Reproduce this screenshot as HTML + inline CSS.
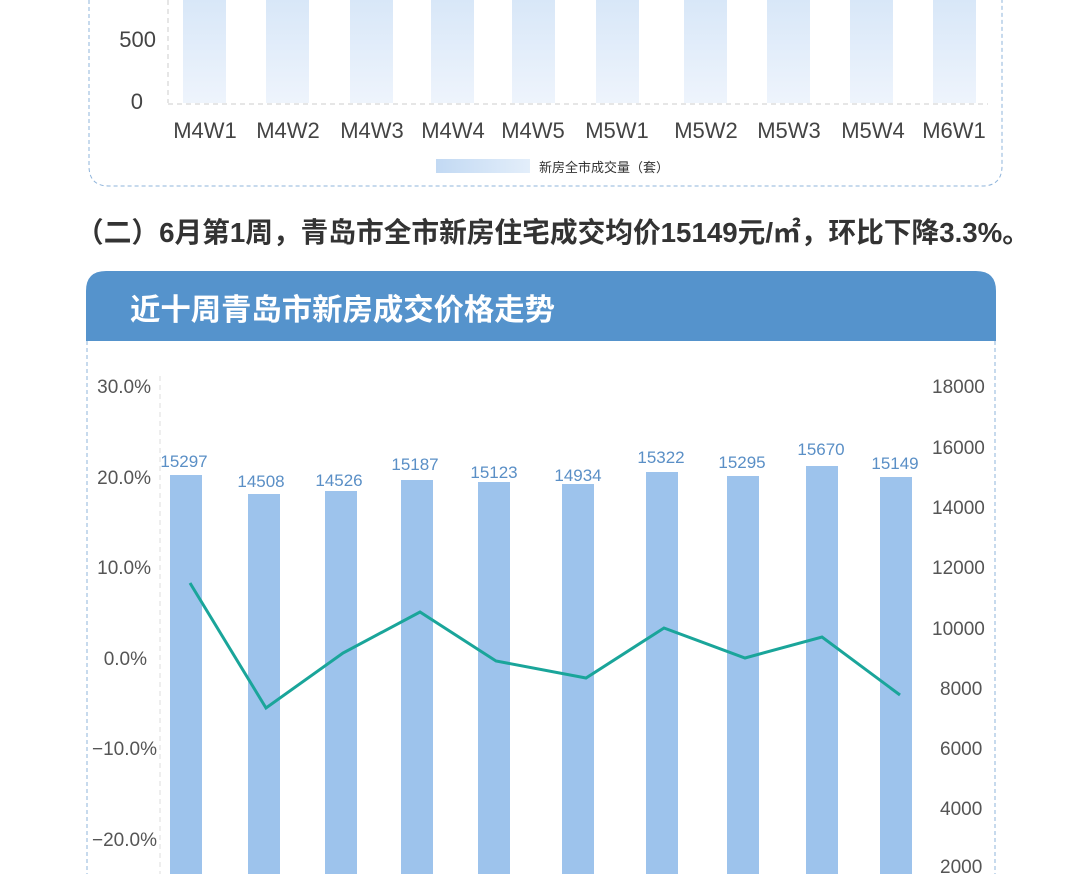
<!DOCTYPE html><html style="overflow:hidden;width:1080px;height:874px"><head><meta charset="utf-8"><style>
body{margin:0;width:1080px;height:874px;overflow:hidden;background:#fff;font-family:"Liberation Sans","Noto Sans CJK SC",sans-serif;position:relative}
.a{position:absolute;display:block}
</style></head><body>
<svg class="a" style="left:0;top:0;overflow:hidden" width="1080" height="874">
<defs><linearGradient id="g" x1="0" y1="0" x2="0" y2="1"><stop offset="0" stop-color="#d8e7f8"/><stop offset="1" stop-color="#eef4fc"/></linearGradient>
<linearGradient id="lg" x1="0" x2="1"><stop offset="0" stop-color="#c2d9f3"/><stop offset="1" stop-color="#e3eefa"/></linearGradient></defs>
<path d="M89 0 V166 Q89 186 109 186 H982 Q1002 186 1002 166 V0" fill="none" stroke="#8fb4db" stroke-dasharray="4 3"/>
<line x1="168" y1="0" x2="168" y2="103" stroke="#ccc" stroke-dasharray="5 4"/>
<g fill="url(#g)">
<rect x="183" y="0" width="43" height="103"/><rect x="266" y="0" width="43" height="103"/><rect x="350" y="0" width="43" height="103"/><rect x="431" y="0" width="43" height="103"/><rect x="512" y="0" width="43" height="103"/><rect x="596" y="0" width="43" height="103"/><rect x="684" y="0" width="43" height="103"/><rect x="767" y="0" width="43" height="103"/><rect x="850" y="0" width="43" height="103"/><rect x="933" y="0" width="43" height="103"/></g>
<line x1="168" y1="104" x2="988" y2="104" stroke="#ccc" stroke-dasharray="5 4"/>
<g font-size="22" fill="#444" text-anchor="end"><text x="156" y="47">500</text><text x="143" y="109">0</text></g>
<g font-size="22" fill="#444" text-anchor="middle"><text x="205" y="138">M4W1</text><text x="288" y="138">M4W2</text><text x="372" y="138">M4W3</text><text x="453" y="138">M4W4</text><text x="533" y="138">M4W5</text><text x="617" y="138">M5W1</text><text x="706" y="138">M5W2</text><text x="789" y="138">M5W3</text><text x="873" y="138">M5W4</text><text x="954" y="138">M6W1</text></g>
<rect x="436" y="159" width="94" height="14" fill="url(#lg)"/>
<text x="539" y="172" font-size="13" fill="#333">新房全市成交量（套）</text>
<text x="76" y="242" font-size="28" font-weight="bold" fill="#333" textLength="954" lengthAdjust="spacingAndGlyphs">（二）6月第1周，青岛市全市新房住宅成交均价15149元/㎡，环比下降3.3%。</text>
<path d="M86 341 V291 Q86 271 106 271 H976 Q996 271 996 291 V341 Z" fill="#5593cc"/>
<text x="130" y="320" font-size="30" font-weight="bold" fill="#fff" textLength="425" lengthAdjust="spacingAndGlyphs">近十周青岛市新房成交价格走势</text>
<line x1="87" y1="341" x2="87" y2="874" stroke="#8fb4db" stroke-dasharray="4 3"/>
<line x1="995" y1="341" x2="995" y2="874" stroke="#8fb4db" stroke-dasharray="4 3"/>
<line x1="160" y1="376" x2="160" y2="874" stroke="#ddd" stroke-dasharray="5 4"/>
<g fill="#9dc3ec">
<rect x="170" y="475" width="32" height="399"/><rect x="248" y="494" width="32" height="380"/><rect x="325" y="491" width="32" height="383"/><rect x="401" y="480" width="32" height="394"/><rect x="478" y="482" width="32" height="392"/><rect x="562" y="484" width="32" height="390"/><rect x="646" y="472" width="32" height="402"/><rect x="727" y="476" width="32" height="398"/><rect x="806" y="466" width="32" height="408"/><rect x="880" y="477" width="32" height="397"/></g>
<g font-size="17" fill="#5a8fc6" text-anchor="middle"><text x="184" y="467">15297</text><text x="261" y="487">14508</text><text x="339" y="486">14526</text><text x="415" y="470">15187</text><text x="494" y="478">15123</text><text x="578" y="481">14934</text><text x="661" y="463">15322</text><text x="742" y="468">15295</text><text x="821" y="455">15670</text><text x="895" y="469">15149</text></g>
<polyline points="190,583 266,708 343,653 420,612 496,661 586,678 664,628 745,658 822,637 900,695" fill="none" stroke="#1aa59a" stroke-width="3"/>
<g font-size="19" fill="#555" text-anchor="end"><text x="151" y="393">30.0%</text><text x="151" y="484">20.0%</text><text x="151" y="574">10.0%</text><text x="147" y="665">0.0%</text><text x="157" y="755">−10.0%</text><text x="157" y="846">−20.0%</text></g>
<g font-size="19" fill="#555"><text x="932" y="393">18000</text><text x="932" y="454">16000</text><text x="932" y="514">14000</text><text x="932" y="574">12000</text><text x="932" y="635">10000</text><text x="940" y="695">8000</text><text x="940" y="755">6000</text><text x="940" y="815">4000</text><text x="940" y="873">2000</text></g>
</svg>
</body></html>
